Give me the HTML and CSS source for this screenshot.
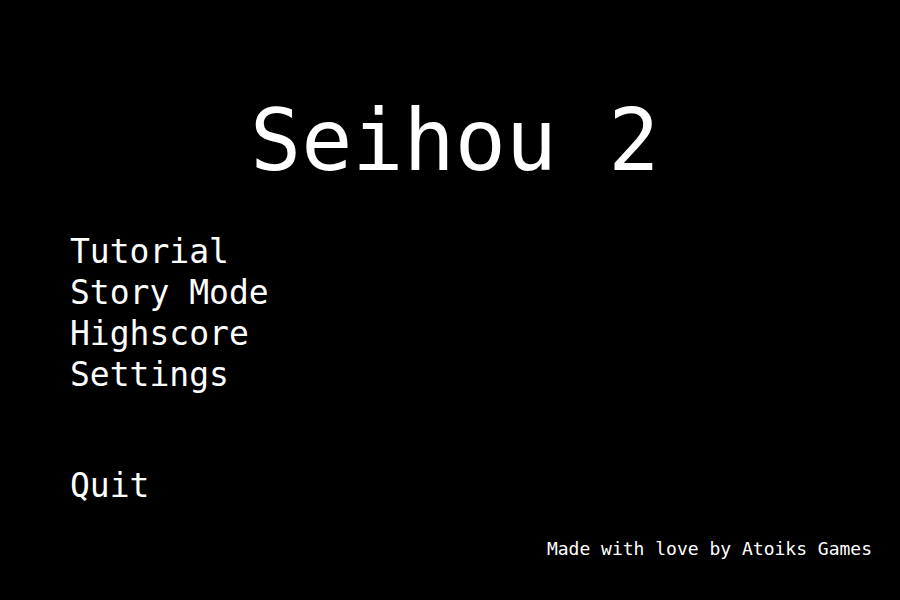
FILE: index.html
```html
<!DOCTYPE html>
<html lang="en">
<head>
<meta charset="utf-8">
<title>Seihou 2</title>
<link rel="stylesheet" href="styles.css">
</head>
<body>
<main class="screen">
  <h1 class="title">Seihou 2</h1>
  <nav class="menu" aria-label="Main menu">
    <button class="item" type="button">Tutorial</button>
    <button class="item" type="button">Story Mode</button>
    <button class="item" type="button">Highscore</button>
    <button class="item" type="button">Settings</button>
    <button class="item quit" type="button">Quit</button>
  </nav>
  <footer class="credit">Made with love by Atoiks Games</footer>
</main>
</body>
</html>
```
FILE: styles.css
```css
body {
  margin: 0;
  background: #000;
  color: #fff;
  font-family: "DejaVu Sans Mono", monospace;
}

.screen {
  display: flex;
  flex-direction: column;
  min-height: 100vh;
  box-sizing: border-box;
  padding: 91px 28px 39px 70px;
}

.title {
  margin: 0 0 40px;
  padding-left: 180px;
  font-size: 85px;
  font-weight: 400;
  line-height: 100px;
}

.menu {
  display: flex;
  flex-direction: column;
  align-items: flex-start;
}

.item {
  padding: 0;
  border: 0;
  background: none;
  color: inherit;
  font-family: inherit;
  font-size: 33px;
  line-height: 41px;
  cursor: pointer;
}

.quit {
  margin-top: 70px;
}

.credit {
  margin-top: auto;
  align-self: flex-end;
  font-size: 18px;
  line-height: 24px;
}
```
